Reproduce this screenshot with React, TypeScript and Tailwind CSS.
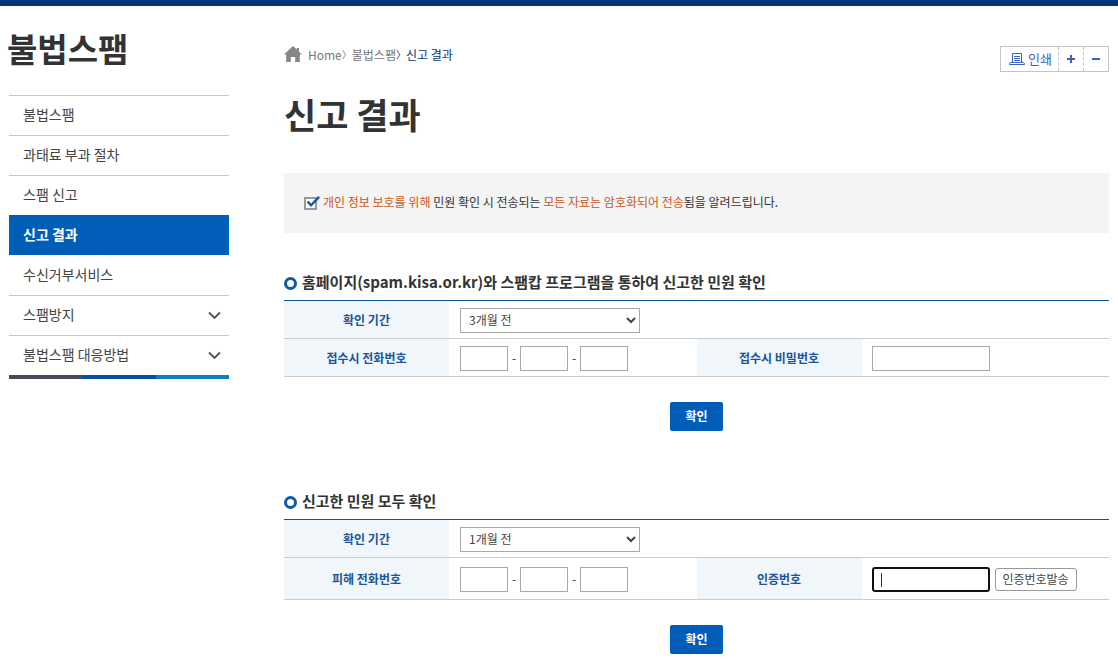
import { useState } from "react";
import clsx from "clsx";

interface MenuItem {
  label: string;
  active?: boolean;
  hasChildren?: boolean;
}

const menu: MenuItem[] = [
  { label: "불법스팸" },
  { label: "과태료 부과 절차" },
  { label: "스팸 신고" },
  { label: "신고 결과", active: true },
  { label: "수신거부서비스" },
  { label: "스팸방지", hasChildren: true },
  { label: "불법스팸 대응방법", hasChildren: true },
];

const periods = ["1개월 전", "3개월 전", "6개월 전", "12개월 전"];

const inputClass = "h-[25px] border border-[#a9a9a9] bg-white px-2 outline-none";

function ChevronIcon() {
  return (
    <svg
      className="mt-0.5"
      width="13"
      height="9"
      viewBox="0 0 13 9"
      fill="none"
      aria-hidden="true"
    >
      <path d="M1 1.5 6.5 7 12 1.5" stroke="#555" strokeWidth="1.9" />
    </svg>
  );
}

function HomeIcon() {
  return (
    <svg
      className="mb-0.5"
      width="18"
      height="16"
      viewBox="0 0 18 16"
      fill="#868686"
      aria-hidden="true"
    >
      <path d="M9 0 0 8.6h2.2V16h4.6v-5h4.4v5h4.6V8.6H18l-3-2.9V2h-2.2v1.6z" />
    </svg>
  );
}

function PrintIcon() {
  return (
    <svg
      width="16"
      height="14"
      viewBox="0 0 16 14"
      fill="none"
      stroke="#3a62bd"
      aria-hidden="true"
    >
      <path d="M3.5 10V1.5h9V10M5 4.5h6M5 6.5h6M5 8.5h6" />
      <path d="M3.5 9.5.5 11.5v1h15v-1l-3-2M2.5 10.5h11" />
    </svg>
  );
}

function CheckIcon() {
  return (
    <svg width="16" height="14" viewBox="0 0 16 14" fill="none" aria-hidden="true">
      <rect x="1" y="2" width="11" height="11" fill="#fff" stroke="#999" strokeWidth="2" />
      <path d="M3.5 5.5 7 9.3 15.2.9" stroke="#0f58a5" strokeWidth="2.4" />
    </svg>
  );
}

function Sidebar() {
  return (
    <aside className="w-[220px] shrink-0">
      <h2 className="-ml-0.5 pt-[18px] text-[33px] leading-[48px] font-bold text-[#333]">
        불법스팸
      </h2>
      <nav className="mt-[23px]">
        <ul>
          {menu.map((item, i) => (
            <li key={item.label}>
              <a
                href="#"
                className={clsx(
                  "flex h-10 items-center justify-between border-t pr-2 pb-0.5 pl-3.5 text-[14px]",
                  item.active
                    ? "border-[#005eb8] bg-[#005eb8] font-bold text-white"
                    : "text-[#444]",
                  !item.active &&
                    (menu[i - 1]?.active ? "border-transparent" : "border-[#c8c8c8]")
                )}
              >
                {item.label}
                {item.hasChildren && <ChevronIcon />}
              </a>
            </li>
          ))}
        </ul>
        <div className="flex h-1">
          <span className="flex-1 bg-[#464a5b]" />
          <span className="flex-1 bg-[#07509f]" />
          <span className="flex-1 bg-[#0f80bb]" />
        </div>
      </nav>
    </aside>
  );
}

function SectionTitle({ children }: { children: React.ReactNode }) {
  return (
    <h2 className="flex h-[34px] items-center gap-[5px] border-b border-[#0f5291] text-[15px] font-bold text-[#333]">
      <span className="size-[13px] rounded-full border-[3px] border-[#0f58a5]" />
      <span className="pb-0.5">{children}</span>
    </h2>
  );
}

function Columns() {
  return (
    <colgroup>
      <col className="w-[20%]" />
      <col className="w-[30%]" />
      <col className="w-[20%]" />
      <col className="w-[30%]" />
    </colgroup>
  );
}

function HeadCell({ htmlFor, children }: { htmlFor: string; children: React.ReactNode }) {
  return (
    <th scope="row" className="bg-[#f0f6fa] font-bold text-[#1a549b]">
      <label htmlFor={htmlFor}>{children}</label>
    </th>
  );
}

function PeriodSelect({ id, initial }: { id: string; initial: string }) {
  const [value, setValue] = useState(initial);
  return (
    <select
      id={id}
      value={value}
      onChange={(e) => setValue(e.target.value)}
      className="block h-[25px] w-[180px] border border-[#a9a9a9] bg-white pb-0.5 pl-1 text-[#444]"
    >
      {periods.map((p) => (
        <option key={p}>{p}</option>
      ))}
    </select>
  );
}

function PhoneInputs({ id }: { id: string }) {
  return (
    <div className="flex items-center">
      <input id={id} type="text" maxLength={3} className={clsx(inputClass, "w-12")} />
      <span className="w-3 pb-0.5 text-center">-</span>
      <input
        type="text"
        maxLength={4}
        aria-label="전화번호 가운데 자리"
        className={clsx(inputClass, "w-12")}
      />
      <span className="w-3 pb-0.5 text-center">-</span>
      <input
        type="text"
        maxLength={4}
        aria-label="전화번호 끝자리"
        className={clsx(inputClass, "w-12")}
      />
    </div>
  );
}

function SubmitButton() {
  return (
    <div className="mt-[25px] flex justify-center">
      <button
        type="submit"
        className="h-[29px] w-[53px] rounded-[2px] bg-[#005eb8] pb-0.5 text-[12px] font-bold text-white"
      >
        확인
      </button>
    </div>
  );
}

export default function App() {
  return (
    <div className="min-h-screen border-t-[6px] border-[#00377b] bg-white font-['Noto_Sans_CJK_KR',sans-serif] text-[12px] text-[#333]">
      <div className="flex gap-[55px] px-[9px]">
        <Sidebar />

        <main className="min-w-0 flex-1">
          <div className="flex items-start justify-between pt-10">
            <nav className="flex items-center leading-[18px] text-[#777]">
              <HomeIcon />
              <a href="#" className="ml-1.5">
                Home
              </a>
              <span className="text-[10px]">〉</span>
              <a href="#">불법스팸</a>
              <span className="text-[10px] text-[#0b3470]">〉</span>
              <span className="text-[#0b3470]">신고 결과</span>
            </nav>
            <div className="flex h-[26px] border border-[#c4c4c4] text-[#3a62bd]">
              <button type="button" className="flex items-center gap-[3px] px-2 pr-1.5 text-[13px]">
                <PrintIcon />
                인쇄
              </button>
              <button
                type="button"
                aria-label="확대"
                className="flex w-[25px] items-center justify-center border-l border-dashed border-[#c4c4c4]"
              >
                <svg width="8" height="8" viewBox="0 0 8 8" fill="none">
                  <path d="M4 0v8M0 4h8" stroke="#3a62bd" strokeWidth="2" />
                </svg>
              </button>
              <button
                type="button"
                aria-label="축소"
                className="flex w-[25px] items-center justify-center border-l border-dashed border-[#c4c4c4]"
              >
                <svg width="8" height="8" viewBox="0 0 8 8" fill="none">
                  <path d="M0 4h8" stroke="#3a62bd" strokeWidth="2" />
                </svg>
              </button>
            </div>
          </div>

          <h1 className="mt-4 text-[35px] leading-[52px] font-bold text-[#333]">신고 결과</h1>

          <p className="mt-[33px] flex h-[60px] items-center gap-[3px] bg-[#f4f4f4] px-5">
            <CheckIcon />
            <span className="pb-0.5">
              <span className="text-[#c8571b]">개인 정보 보호를 위해</span> 민원 확인 시 전송되는{" "}
              <span className="text-[#c8571b]">모든 자료는 암호화되어 전송</span>됨을
              알려드립니다.
            </span>
          </p>

          {/* 홈페이지 / 스팸캅 신고 */}
          <form className="mt-[34px]" onSubmit={(e) => e.preventDefault()}>
            <SectionTitle>
              홈페이지(spam.kisa.or.kr)와 스팸캅 프로그램을 통하여 신고한 민원 확인
            </SectionTitle>
            <table className="w-full table-fixed">
              <Columns />
              <tbody>
                <tr className="border-b border-[#c8cccf]">
                  <HeadCell htmlFor="report-period">확인 기간</HeadCell>
                  <td colSpan={3} className="px-[11px] pt-[7px] pb-[5px]">
                    <PeriodSelect id="report-period" initial="3개월 전" />
                  </td>
                </tr>
                <tr className="border-b border-[#c8cccf]">
                  <HeadCell htmlFor="report-phone">접수시 전화번호</HeadCell>
                  <td className="px-[11px] pt-[7px] pb-[5px]">
                    <PhoneInputs id="report-phone" />
                  </td>
                  <HeadCell htmlFor="report-password">접수시 비밀번호</HeadCell>
                  <td className="px-2.5 pt-[7px] pb-[5px]">
                    <input
                      id="report-password"
                      type="password"
                      className={clsx(inputClass, "block w-[118px]")}
                    />
                  </td>
                </tr>
              </tbody>
            </table>
            <SubmitButton />
          </form>

          {/* 전체 민원 */}
          <form className="mt-[55px] pb-2.5" onSubmit={(e) => e.preventDefault()}>
            <SectionTitle>신고한 민원 모두 확인</SectionTitle>
            <table className="w-full table-fixed">
              <Columns />
              <tbody>
                <tr className="border-b border-[#c8cccf]">
                  <HeadCell htmlFor="all-period">확인 기간</HeadCell>
                  <td colSpan={3} className="px-[11px] pt-[7px] pb-[5px]">
                    <PeriodSelect id="all-period" initial="1개월 전" />
                  </td>
                </tr>
                <tr className="border-b border-[#c8cccf]">
                  <HeadCell htmlFor="all-phone">피해 전화번호</HeadCell>
                  <td className="px-[11px] pt-[9px] pb-[7px]">
                    <PhoneInputs id="all-phone" />
                  </td>
                  <HeadCell htmlFor="all-code">인증번호</HeadCell>
                  <td className="px-2.5 pt-[9px] pb-[7px]">
                    <div className="flex items-center gap-[5px]">
                      <div className="relative">
                        <input
                          id="all-code"
                          type="text"
                          className="block h-[25px] w-[118px] rounded-[3px] border-2 border-[#101010] bg-white px-[7px] caret-transparent outline-none"
                        />
                        <span className="pointer-events-none absolute top-1.5 left-[9px] h-3.5 w-px bg-[#333]" />
                      </div>
                      <button
                        type="button"
                        className="h-[23px] w-[82px] rounded-[3px] border border-[#999] bg-white pb-0.5 text-[#444]"
                      >
                        인증번호발송
                      </button>
                    </div>
                  </td>
                </tr>
              </tbody>
            </table>
            <SubmitButton />
          </form>
        </main>
      </div>
    </div>
  );
}
